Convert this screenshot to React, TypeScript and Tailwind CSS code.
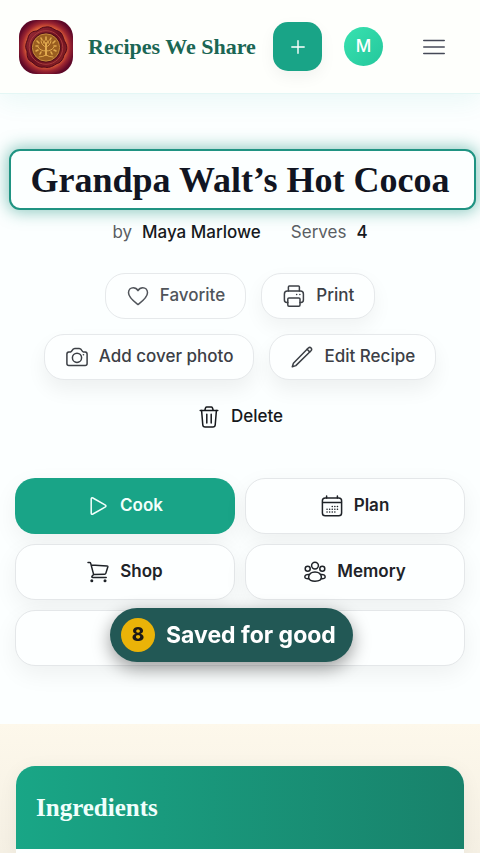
import type { ReactNode } from 'react'

const serif = "font-['Liberation_Serif',serif]"

const Icon = ({ children }: { children: ReactNode }) => (
    <svg viewBox="0 0 22 22" className="w-[22px] h-[22px] shrink-0" fill="none" stroke="currentColor" strokeWidth="1.5" strokeLinecap="round" strokeLinejoin="round" aria-hidden="true">
        {children}
    </svg>
)

const Heart = () => (
    <Icon>
        <path d="M11 19.6C7.5 16.9 1.5 12.6 1.5 7.8C1.5 4.8 3.6 2.7 6.2 2.7C8.3 2.7 10 3.8 11 5.6C12 3.8 13.7 2.7 15.8 2.7C18.4 2.7 20.5 4.8 20.5 7.8C20.5 12.6 14.5 16.9 11 19.6Z" />
    </Icon>
)

const Printer = () => (
    <Icon>
        <path d="M5.4 6V2.1Q5.4 1.1 6.4 1.1H15.4Q16.4 1.1 16.4 2.1V6" />
        <path d="M4.8 17.4H3.8Q1.4 17.4 1.4 15V9Q1.4 6 4.4 6H17.4Q20.4 6 20.4 9V15Q20.4 17.4 18 17.4H17" />
        <path d="M6 12.9H15.8Q17 12.9 17 14.1V20Q17 21.2 15.8 21.2H6Q4.8 21.2 4.8 20V14.1Q4.8 12.9 6 12.9Z" />
        <path d="M13.6 9.4H13.7M16.8 9.4H16.9" />
    </Icon>
)

const Camera = () => (
    <Icon>
        <path d="M.9 8.3Q.9 6.3 2.8 6.1L4.6 5.9Q5.5 5.7 6 4.7Q7 2.6 8.7 2.6H13.3Q15 2.6 16 4.7Q16.5 5.7 17.4 5.9L19.2 6.1Q21.1 6.3 21.1 8.3V17.4Q21.1 19.4 19.1 19.4H2.9Q.9 19.4 .9 17.4Z" />
        <circle cx="11" cy="11.8" r="4.6" />
        <path d="M17.4 8.8H17.5" />
    </Icon>
)

const Pencil = () => (
    <Icon>
        <path d="M1.3 20.7L2.4 17.2L17.3 2Q18.8 .7 20.1 2Q21.3 3.3 20 4.8L4.8 19.6Z" />
        <path d="M16.1 3.3L18.7 5.9" />
    </Icon>
)

const Trash = () => (
    <Icon>
        <path d="M2.2 4.4H19.8M6.8 4.2L7.6 1.8Q7.9 1 8.8 1H13.2Q14.1 1 14.4 1.8L15.2 4.2" />
        <path d="M3.6 4.6L4.8 19Q5 21.1 7.1 21.1H14.9Q17 21.1 17.2 19L18.4 4.6" />
        <path d="M8.8 8.3V17M13.2 8.3V17" />
    </Icon>
)

const Play = () => (
    <Icon>
        <path d="M4.2 4.1Q4.2 2.2 5.9 3L18 9.8Q19.9 11 18 12.2L5.9 19Q4.2 19.8 4.2 17.9Z" />
    </Icon>
)

const Cart = () => (
    <Icon>
        <path d="M1 1.6H2.6Q3.5 1.6 3.7 2.4L6.6 13.4L5 15.2Q4.4 16.6 5.8 16.6H19.2M4.2 4L20 4.9Q21 5 20.8 6L18.8 12.4Q18.5 13.3 17.6 13.3L6.6 13.4" />
        <circle cx="4.8" cy="19.8" r="1.5" fill="currentColor" stroke="none" />
        <circle cx="18" cy="19.8" r="1.5" fill="currentColor" stroke="none" />
    </Icon>
)

const Calendar = () => (
    <Icon>
        <rect x="1.4" y="3" width="19.2" height="17.8" rx="2.8" />
        <path d="M1.6 7.4H20.4M5.6 1V3M16.4 1V3" />
        <path d="M11.2 11.6H16.8M6 14.3H16.8M6 16.9H14" strokeWidth="1.5" strokeDasharray=".1 2.5" />
    </Icon>
)

const People = () => (
    <Icon>
        <circle cx="11" cy="4.6" r="3.4" />
        <circle cx="3.7" cy="7.7" r="2.5" />
        <circle cx="18.3" cy="7.7" r="2.5" />
        <path d="M4.6 16.6C4.6 13 7.6 10.9 11 10.9S17.4 13 17.4 16.6C17.4 19 14.2 20.2 11 20.2S4.6 19 4.6 16.6Z" />
        <path d="M5.6 13.5Q1 12.9 .8 16Q1 18 4.8 17.6M16.4 13.5Q21 12.9 21.2 16Q21 18 17.2 17.6" />
    </Icon>
)

const Logo = () => (
    <svg viewBox="0 0 54 54" className="w-[54px] h-[54px] shrink-0" aria-hidden="true">
        <defs>
            <radialGradient id="velvet" r=".62">
                <stop offset="0" stopColor="#e0663c" />
                <stop offset=".6" stopColor="#d85a36" />
                <stop offset=".72" stopColor="#9c2530" />
                <stop offset=".86" stopColor="#620928" />
                <stop offset="1" stopColor="#500522" />
            </radialGradient>
            <linearGradient id="wax" x1="0" y1="0" x2="1" y2="1">
                <stop offset="0" stopColor="#a0303a" />
                <stop offset=".5" stopColor="#6b0f20" />
                <stop offset="1" stopColor="#8e2526" />
            </linearGradient>
            <radialGradient id="gold">
                <stop offset="0" stopColor="#c98a33" />
                <stop offset="1" stopColor="#cf943a" />
            </radialGradient>
        </defs>
        <rect width="54" height="54" rx="17" fill="url(#velvet)" />
        <path d="M27 7C32 6 35 10 39 11C44 13 44 18 46 22C49 27 48 31 45 35C44 40 41 43 37 44C33 47 29 48 25 47C20 48 16 45 13 42C8 40 8 35 8 31C5 26 8 22 9 18C10 13 14 11 18 11C21 9 23 7 27 7Z" fill="url(#wax)" stroke="#4c0717" />
        <circle cx="27" cy="27.5" r="16.8" fill="none" stroke="#a83c3c" />
        <circle cx="27" cy="27.5" r="15" fill="#54101a" />
        <circle cx="27" cy="27.5" r="13.6" fill="#9a5e20" stroke="#c98c3c" />
        <g stroke="#e0a94e" fill="none" strokeLinecap="round">
            <path d="M27 35V23" strokeWidth="2" />
            <path d="M27 31Q21 31 19 27M27 31Q33 31 35 27M27 27Q23 26 22 21M27 27Q31 26 32 21M27 35Q24 37 20 37M27 35Q30 37 34 37" strokeWidth="1" />
            <path d="M27 17V20M22 18L23 20M32 18L31 20M18 21L20 23M36 21L34 23M17 26H19M37 26H35M17 31L19 30M37 31L35 30M21 34L22 32M33 34L32 32M25 21V23M29 21V23" strokeWidth="1.6" />
        </g>
    </svg>
)

const ActionButton = ({ icon, label, className }: { icon: ReactNode, label: string, className: string }) => (
    <button className={`flex items-center gap-[11px] h-[46px] pl-[21px] pr-[20px] rounded-[20px] border border-[#e6e9eb] bg-[#fdffff] text-[17px] font-medium ${className}`}>
        {icon}
        {label}
    </button>
)

const GridButton = ({ icon, label }: { icon: ReactNode, label: string }) => (
    <button className="flex items-center justify-center gap-[11px] h-[56px] rounded-[20px] border border-[#e4e7e9] bg-[#fdffff] text-[#1f2328] text-[17px] font-semibold shadow-[0_8px_24px_rgba(0,0,0,0.06)]">
        {icon}
        {label}
    </button>
)

export default function App() {
    return (
        <div className="min-h-screen flex flex-col bg-[#fcffff] text-[#1f2328] font-['Inter',sans-serif]">
            <header className="flex items-center h-[94px] pl-[19px] pr-[35px] bg-[#fefffc] border-b border-[#e4f7f5] shadow-[0_8px_24px_rgba(20,150,140,0.07)]">
                <a href="#" className="flex items-center gap-[15px] mr-auto">
                    <Logo />
                    <span className={`${serif} text-[22px] font-bold text-[#1b6654] whitespace-nowrap`}>Recipes We Share</span>
                </a>
                <button aria-label="Add recipe" className="flex items-center justify-center w-[49px] h-[49px] shrink-0 rounded-[15px] bg-[#19a487] text-white mr-[22px] shadow-[0_6px_16px_rgba(0,0,0,0.05)]">
                    <svg viewBox="0 0 14 14" className="w-[14px] h-[14px]" stroke="currentColor" strokeWidth="1.4" strokeLinecap="round"><path d="M7 .8V13.2M.8 7H13.2" /></svg>
                </button>
                <button className="w-[39px] h-[39px] shrink-0 rounded-full bg-linear-to-br from-[#38e2b0] to-[#24c79c] text-white text-[17px] font-medium mr-[40px]">M</button>
                <button aria-label="Menu" className="shrink-0 text-[#454957]">
                    <svg viewBox="0 0 22 16" className="w-[22px] h-[16px]" stroke="currentColor" strokeWidth="1.6" strokeLinecap="round"><path d="M.8 1.5H21.2M.8 8H21.2M.8 14.5H21.2" /></svg>
                </button>
            </header>

            <main className="flex-1 flex flex-col">
                <section className="pt-[55px] pb-[58px]">
                    <div className="ml-[9px] mr-1 h-[61px] flex items-center justify-center pr-[5px] rounded-[11px] border-2 border-[#1f9382] bg-[#fcffff] shadow-[0_0_16px_2px_rgba(31,147,130,0.5)]">
                        <h1 className={`${serif} text-[36px] leading-[44px] font-bold text-[#111522] whitespace-nowrap`}>Grandpa Walt’s Hot Cocoa</h1>
                    </div>

                    <div className="flex justify-center gap-[30px] mt-[10px] text-[17px] leading-[24px] text-[#5a5e63]">
                        <p className="flex gap-[10px]"><span>by</span><span className="font-medium text-[#16191d]">Maya Marlowe</span></p>
                        <p className="flex gap-[10px]"><span>Serves</span><span className="font-medium text-[#16191d]">4</span></p>
                    </div>

                    <div className="flex flex-wrap justify-center gap-[15px] mt-[29px] px-4">
                        <ActionButton icon={<Heart />} label="Favorite" className="text-[#50545a]" />
                        <ActionButton icon={<Printer />} label="Print" className="text-[#3c4046] shadow-[0_8px_20px_rgba(0,0,0,0.05)]" />
                        <ActionButton icon={<Camera />} label="Add cover photo" className="text-[#3c4046] shadow-[0_10px_20px_rgba(0,0,0,0.06)]" />
                        <ActionButton icon={<Pencil />} label="Edit Recipe" className="text-[#3c4046] shadow-[0_10px_20px_rgba(0,0,0,0.06)]" />
                    </div>
                    <div className="flex justify-center mt-[14px]">
                        <button className="flex items-center gap-[11px] h-[46px] pl-[21px] pr-[20px] text-[17px] font-medium text-[#16191d]">
                            <Trash />
                            Delete
                        </button>
                    </div>

                    <div className="grid grid-cols-2 gap-[10px] mt-[38px] px-[15px]">
                        <button className="flex items-center justify-center gap-[11px] h-[56px] rounded-[20px] bg-[#19a487] text-[#f3fffc] text-[17px] font-semibold shadow-[0_8px_24px_rgba(0,0,0,0.06)]">
                            <Play />
                            Cook
                        </button>
                        <GridButton icon={<Calendar />} label="Plan" />
                        <GridButton icon={<Cart />} label="Shop" />
                        <GridButton icon={<People />} label="Memory" />
                        <button aria-label="Share" className="col-span-2 h-[56px] rounded-[20px] border border-[#e4e7e9] bg-[#fdffff] shadow-[0_8px_24px_rgba(0,0,0,0.06)]" />
                    </div>
                </section>

                <section className="flex-1 flex flex-col px-4 pt-[42px] bg-linear-to-b from-[#fdf8eb] to-[#f5f0e4]">
                    <div className="flex-1 rounded-t-[19px] bg-[#fdffff] shadow-[0_4px_20px_rgba(0,0,0,0.06)]">
                        <div className="flex items-center h-[83px] px-5 rounded-t-[19px] bg-linear-to-r from-[#19a686] to-[#18826b]">
                            <h2 className={`${serif} text-[25px] font-bold text-[#f0fffc]`}>Ingredients</h2>
                        </div>
                    </div>
                </section>
            </main>

            <div role="status" className="fixed left-[110px] top-[608px] flex items-center gap-[11px] h-[54px] pl-[11px] pr-[17px] rounded-full bg-[#225855] text-white shadow-[0_6px_18px_rgba(0,0,0,0.4)]">
                <span className="flex items-center justify-center w-[34px] h-[34px] rounded-full bg-[#eab308] text-[#1c1917] text-[19px] font-extrabold">8</span>
                <span className="text-[23px] font-bold whitespace-nowrap">Saved for good</span>
            </div>
        </div>
    )
}
